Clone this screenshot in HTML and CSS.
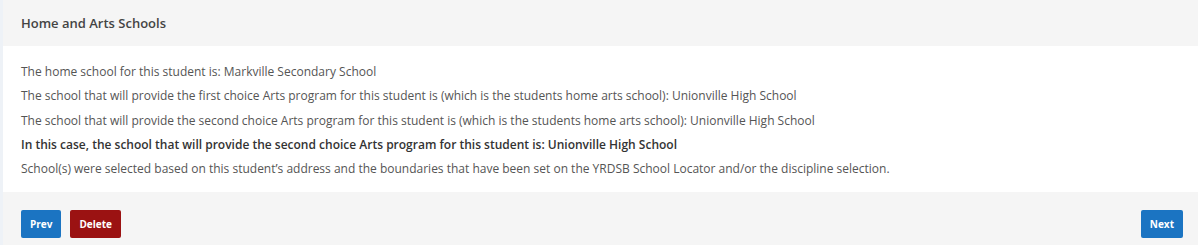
FILE: index.html
```html
<!DOCTYPE html>
<html lang="en">
<head>
<meta charset="utf-8">
<title>Home and Arts Schools</title>
<link rel="stylesheet" href="styles.css">
</head>
<body>
<div class="card">
  <div class="card-header">Home and Arts Schools</div>
  <div class="card-body">
    <p>The home school for this student is: Markville Secondary School</p>
    <p>The school that will provide the first choice Arts program for this student is (which is the students home arts school): Unionville High School</p>
    <p>The school that will provide the second choice Arts program for this student is (which is the students home arts school): Unionville High School</p>
    <p class="strong">In this case, the school that will provide the second choice Arts program for this student is: Unionville High School</p>
    <p>School(s) were selected based on this student’s address and the boundaries that have been set on the YRDSB School Locator and/or the discipline selection.</p>
  </div>
  <div class="card-footer">
    <div class="btn-group">
      <button class="btn btn-primary">Prev</button>
      <button class="btn btn-danger">Delete</button>
    </div>
    <button class="btn btn-primary">Next</button>
  </div>
</div>
</body>
</html>
```

FILE: styles.css
```css
html, body {
  margin: 0;
  padding: 0;
}
body {
  background: #eef2f7;
  font-family: "Open Sans", "Noto Sans", sans-serif;
  color: #555;
  height: 245px;
  overflow: hidden;
}
.card {
  margin-left: 3px;
  background: #fff;
}
.card-header {
  height: 46px;
  box-sizing: border-box;
  padding: 0 18px;
  display: flex;
  align-items: center;
  background: #f5f5f5;
  font-size: 13px;
  font-weight: 600;
  color: #444;
}
.card-body {
  padding: 14px 18px 11px;
  font-size: 12px;
}
.card-body p {
  margin: 0;
  line-height: 24.25px;
}
.card-body p.strong {
  font-weight: 600;
  color: #333;
}
.card-footer {
  background: #f5f5f5;
  height: 60px;
  box-sizing: border-box;
  padding: 18px 15px 0 18px;
  display: flex;
  justify-content: space-between;
  align-items: flex-start;
}
.btn-group {
  display: flex;
  gap: 9px;
}
.btn {
  height: 28px;
  border: 0;
  border-radius: 2px;
  padding: 0 9px;
  font-family: inherit;
  font-size: 10px;
  font-weight: 700;
  color: #fff;
  cursor: pointer;
}
.btn-primary {
  background: #1b74c2;
}
.btn-danger {
  background: #9b1212;
}
```
